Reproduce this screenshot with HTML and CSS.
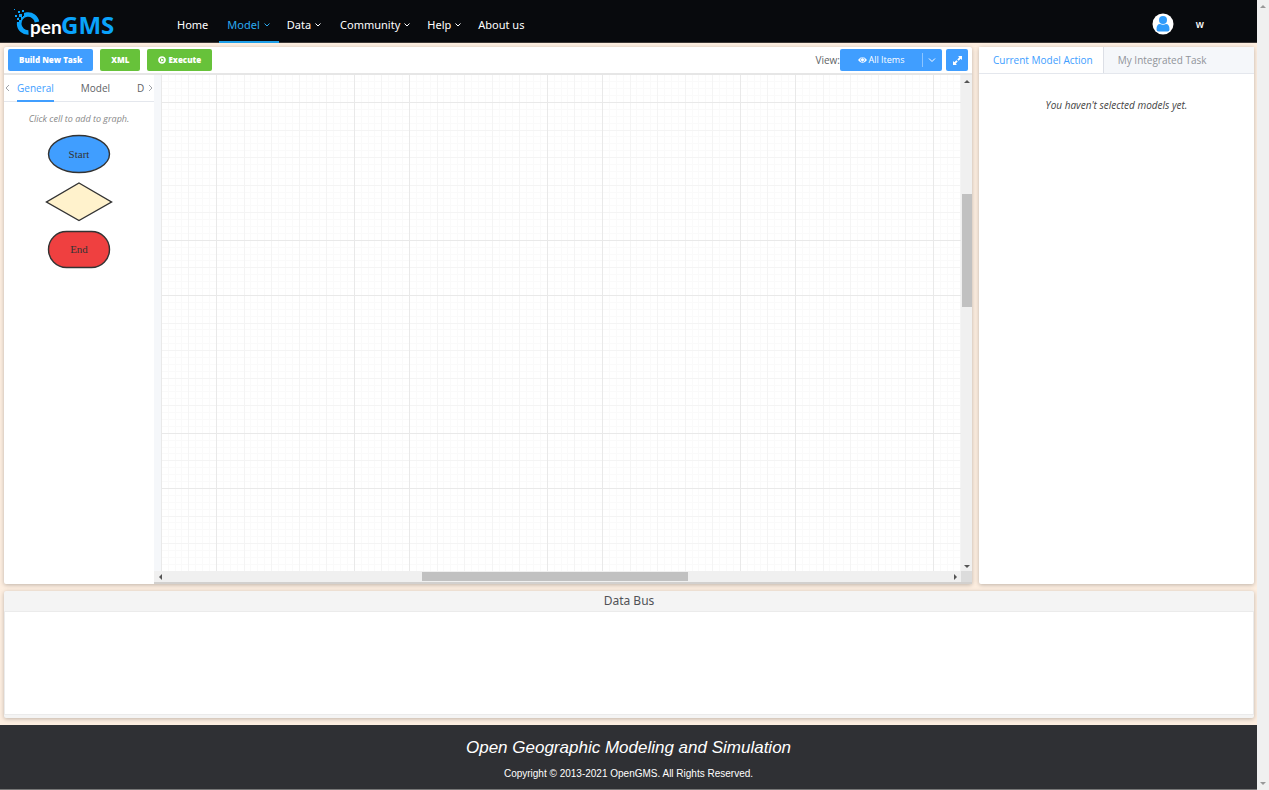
FILE: index.html
```
<!DOCTYPE html>
<html lang="en">
<head>
<meta charset="utf-8">
<title>OpenGMS</title>
<link rel="stylesheet" href="styles.css">
</head>
<body>
<div class="page">
  <header class="header">
    <a class="logo" href="#" aria-label="OpenGMS">
      <svg width="102" height="34" viewBox="0 0 102 34">
        <path d="M15.500 25.500A9 9 0 1 1 24 15" fill="none" stroke="#0aa3fb" stroke-width="4.600"/>
        <g fill="#080a0d">
          <rect x="9" y="6" width="2" height="3"/><rect x="6" y="10" width="2" height="3"/><rect x="8" y="8" width="2" height="2"/><rect x="4" y="13" width="2" height="2"/>
        </g>
        <g fill="#0aa3fb">
          <rect x="1" y="2" width="1" height="1"/><rect x="5" y="4" width="2" height="2"/><rect x="9" y="3" width="2" height="2"/>
          <rect x="2" y="8" width="2" height="2"/><rect x="6" y="7" width="3" height="3"/><rect x="4" y="11" width="2" height="2"/>
        </g>
        <text class="logo-pen" x="17" y="27">pen</text>
        <text class="logo-gms" x="48" y="27">GMS</text>
      </svg>
    </a>
    <nav class="nav">
      <a href="#">Home</a>
      <a href="#" class="active">Model<svg class="chev" viewBox="0 0 8 6"><path d="M1.500 1.500 4 4 6.500 1.500"/></svg></a>
      <a href="#">Data<svg class="chev" viewBox="0 0 8 6"><path d="M1.500 1.500 4 4 6.500 1.500"/></svg></a>
      <a href="#" class="community">Community<svg class="chev" viewBox="0 0 8 6"><path d="M1.500 1.500 4 4 6.500 1.500"/></svg></a>
      <a href="#">Help<svg class="chev" viewBox="0 0 8 6"><path d="M1.500 1.500 4 4 6.500 1.500"/></svg></a>
      <a href="#">About us</a>
    </nav>
    <div class="user">
      <svg width="22" height="22" viewBox="0 0 22 22"><circle cx="11" cy="11" r="10.500" fill="#fff"/><circle cx="11" cy="7" r="4" fill="#2f9cfb"/><path d="M4.500 16.500Q4.500 11 8 11q3 1.500 6 0 3.500 0 3.500 5.500 0 2-2 2h-9q-2 0-2-2z" fill="#2f9cfb"/></svg>
      <span>w</span>
    </div>
  </header>

  <main class="main">
    <div class="row">
      <section class="panel editor">
        <div class="toolbar">
          <button class="btn blue">Build New Task</button>
          <button class="btn green">XML</button>
          <button class="btn green"><svg width="8" height="8" viewBox="0 0 8 8"><circle cx="4" cy="4" r="3" fill="none" stroke="#fff" stroke-width="1.700"/><path d="M3 2.200 6 4 3 5.800z" fill="#fff"/></svg>Execute</button>
          <div class="view">
            <span>View:</span>
            <button class="btn blue items"><svg width="9" height="8" viewBox="0 0 9 8"><path d="M0 4Q4.500-2 9 4 4.500 10 0 4z" fill="#fff"/><circle cx="4.500" cy="3.800" r="2" fill="none" stroke="#409eff" stroke-width=".7"/></svg>All Items</button>
            <button class="btn blue drop" aria-label="Choose view"><svg width="8" height="6" viewBox="0 0 8 6"><path d="M1 1.500 4 4.500 7 1.500" fill="none" stroke="#fff"/></svg></button>
            <button class="btn blue expand" aria-label="Full screen"><svg width="9" height="9" viewBox="0 0 9 9" fill="#fff"><path d="M5 0h4v4L7.700 2.700 5.600 4.700 4.300 3.400 6.300 1.300zM4 9H0V5l1.300 1.300 2.100-2 1.300 1.300-2 2.100z"/></svg></button>
          </div>
        </div>
        <div class="work">
          <aside class="palette">
            <div class="tabs">
              <button class="arrow" aria-label="Previous"><svg width="5" height="8" viewBox="0 0 5 8"><path d="M4 1 1 4l3 3"/></svg></button>
              <div class="tab-clip">
                <button class="tab on">General</button><button class="tab">Model</button><button class="tab">D</button>
              </div>
              <button class="arrow" aria-label="Next"><svg width="5" height="8" viewBox="0 0 5 8"><path d="M1 1l3 3-3 3"/></svg></button>
            </div>
            <p class="hint">Click cell to add to graph.</p>
            <svg class="shapes" width="70" height="138" viewBox="0 0 70 138">
              <g stroke="#333" stroke-width="1.400">
                <ellipse cx="35" cy="20" rx="30.500" ry="18.500" fill="#409eff"/>
                <path d="M35 49 67.500 68 35 86.500 2.500 68z" fill="#fff2cc"/>
                <rect x="4.500" y="97.500" width="61" height="36" rx="18" fill="#ef4040"/>
              </g>
              <text x="35" y="24">Start</text>
              <text x="35" y="119">End</text>
            </svg>
          </aside>
          <div class="canvas-wrap">
            <div class="canvas">
              <svg width="100%" height="100%" aria-hidden="true">
                <defs><pattern id="grid" x="55" y="27" width="193" height="193" patternUnits="userSpaceOnUse">
                  <g fill="none" stroke-width="1">
                    <path stroke="#fafafa" d="M7.500 0v193M14.500 0v193M21.500 0v193M34.500 0v193M41.500 0v193M48.500 0v193M62.500 0v193M69.500 0v193M76.500 0v193M90.500 0v193M96.500 0v193M103.500 0v193M117.500 0v193M124.500 0v193M131.500 0v193M145.500 0v193M152.500 0v193M158.500 0v193M172.500 0v193M179.500 0v193M186.500 0v193"/>
                    <path stroke="#fafafa" d="M0 7.500h193M0 14.500h193M0 21.500h193M0 34.500h193M0 41.500h193M0 48.500h193M0 62.500h193M0 69.500h193M0 76.500h193M0 90.500h193M0 96.500h193M0 103.500h193M0 117.500h193M0 124.500h193M0 131.500h193M0 145.500h193M0 152.500h193M0 158.500h193M0 172.500h193M0 179.500h193M0 186.500h193"/>
                    <path stroke="#f4f4f4" d="M28.500 0v193M55.500 0v193M83.500 0v193M110.500 0v193M165.500 0v193M0 28.500h193M0 55.500h193M0 83.500h193M0 110.500h193M0 165.500h193"/>
                    <path stroke="#e9e9e9" d="M.5 0v193M138.500 0v193M0 .5h193M0 138.500h193"/>
                  </g>
                </pattern></defs>
                <rect width="100%" height="100%" fill="url(#grid)"/>
              </svg>
            </div>
            <div class="vbar"><i class="up"></i><b></b><i class="down"></i></div>
            <div class="hbar"><i class="left"></i><b></b><i class="right"></i></div>
            <div class="corner"></div>
          </div>
        </div>
      </section>
      <section class="panel actions">
        <div class="action-tabs"><button class="on">Current Model Action</button><button>My Integrated Task</button></div>
        <p>You haven't selected models yet.</p>
      </section>
    </div>
    <section class="panel bus"><h2>Data Bus</h2><div class="bus-body"></div></section>
  </main>

  <footer class="footer">
    <p class="slogan">Open Geographic Modeling and Simulation</p>
    <p class="copy">Copyright © 2013-2021 OpenGMS. All Rights Reserved.</p>
  </footer>
</div>
<div class="pagebar"><i class="up"></i><i class="down"></i></div>
</body>
</html>
```
FILE: styles.css
```
* { box-sizing: border-box; }
body { margin: 0; height: 100vh; display: flex; font: 10px/14px "Open Sans", "Noto Sans", sans-serif; color: #606266; }
button { font: inherit; color: inherit; border: 0; padding: 0; margin: 0; background: none; cursor: pointer; }
a { color: inherit; text-decoration: none; }
p, h2 { margin: 0; }
svg { display: block; flex: none; }
.page { flex: 1; min-width: 0; display: flex; flex-direction: column; }

.header { height: 43px; flex: none; display: flex; background: #080a0d; border-bottom: 1px solid #3c3837; color: #fff; }
.logo { padding: 7px 0 0 13px; width: 169px; }
.logo-pen { font: bold 19px Lato, sans-serif; fill: #fff; }
.logo-gms { font: bold 24px "Noto Sans", sans-serif; fill: #0aa3fb; }
.nav { display: flex; font: 11px/14px "Noto Sans", sans-serif; }
.nav a { display: flex; align-items: center; padding: 6px 8px 0; height: 43px; }
.nav .active { color: #2aa9ef; border-bottom: 2px solid #1e9fe8; padding-top: 8px; margin-left: 3px; }
.nav .community { padding-left: 10px; }
.chev { width: 8px; height: 6px; margin-left: 3px; fill: none; stroke: currentColor; }
.user { margin-left: auto; display: flex; align-items: center; gap: 22px; padding: 6px 53px 0 0; font: 600 10px/14px "Open Sans", sans-serif; }

.main { flex: 1; min-height: 0; display: flex; flex-direction: column; gap: 7px; padding: 4px 3px 7px 4px; background: #fdeee0; }
.row { flex: 1; min-height: 0; display: flex; gap: 7px; }
.panel { background: #fff; border-radius: 2px; box-shadow: 0 1px 4px rgba(0,0,0,.25); }
.editor { flex: 1; min-width: 0; display: flex; flex-direction: column; }
.toolbar { height: 28px; flex: none; display: flex; align-items: center; gap: 7px; padding: 0 4px; border-bottom: 2px solid #e6e6e6; }
.btn { height: 22px; display: flex; align-items: center; justify-content: center; gap: 2px; padding: 0 11px; color: #fff; border-radius: 2px; font: 800 8px/12px "Open Sans", sans-serif; }
.blue { background: #409eff; }
.green { background: #67c23a; }
.view { margin-left: auto; display: flex; align-items: center; }
.items { width: 82px; font: 9px/12px "Open Sans", sans-serif; border-radius: 2px 0 0 2px; }
.drop { width: 20px; padding: 0; border-radius: 0 2px 2px 0; position: relative; }
.drop::before { content: ""; position: absolute; left: 0; top: 4px; bottom: 4px; border-left: 1px solid #8cc5ff; }
.expand { width: 22px; padding: 0; margin-left: 4px; }

.work { flex: 1; min-height: 0; display: flex; }
.palette { width: 150px; flex: none; }
.tabs { display: flex; height: 27px; border-bottom: 1px solid #e4e7ed; }
.arrow { width: 7px; display: flex; align-items: center; justify-content: center; }
.arrow path { fill: none; stroke: #a0a3a8; }
.tab-clip { flex: 1; min-width: 0; display: flex; gap: 27px; padding-left: 6px; height: 27px; }
.tab { flex: none; height: 27px; padding-bottom: 2px; }
.tab.on { color: #409eff; border-bottom: 2px solid #409eff; padding-bottom: 0; }
.hint { margin-top: 10px; text-align: center; font-size: 9px; font-style: italic; color: #888; }
.shapes { margin: 8px auto 0; }
.shapes text { font: 11px "Liberation Serif", serif; fill: #333; text-anchor: middle; }

.canvas-wrap { flex: 1; min-width: 0; display: grid; grid-template: 1fr 11px / 1fr 11px; border-bottom: 2px solid #d2d0ce; }
.canvas { border-left: 7px solid #f5f7fa; min-height: 0; overflow: hidden; }
.vbar, .hbar { display: grid; background: #f0f0f0; }
.vbar { grid-template-rows: 3px 110fr 113fr 256fr 3px; padding: 5px 0 3px; justify-items: center; }
.vbar b { grid-row: 3; width: 10px; }
.vbar .down { grid-row: 5; }
.hbar { grid-template-columns: 3px 260fr 265fr 266fr 3px; padding: 0 4px 0 5px; align-items: center; }
.hbar b { grid-column: 3; height: 9px; }
.hbar .right { grid-column: 5; }
.vbar b, .hbar b { background: #c1c1c1; }
.corner { background: #dcdcdc; }
i { width: 0; height: 0; border: 3px solid transparent; }
.up { border-top: 0; border-bottom-color: #555; }
.down { border-bottom: 0; border-top-color: #555; }
.left { border-left: 0; border-right-color: #555; }
.right { border-right: 0; border-left-color: #555; }

.actions { width: 22%; flex: none; }
.action-tabs { display: flex; height: 27px; background: #f5f7fa; border-bottom: 1px solid #e4e7ed; }
.action-tabs button { padding: 0 12px 0 14px; color: #909399; }
.action-tabs .on { height: 26px; padding-right: 10px; background: #fff; color: #409eff; border-right: 1px solid #dcdfe6; }
.actions p { margin-top: 24px; text-align: center; font-style: italic; color: #444; }

.bus { flex: none; display: flex; flex-direction: column; background: #f4f4f4; padding-bottom: 3px; }
.bus h2 { font: 12px/20px "Noto Sans", sans-serif; text-align: center; color: #505256; }
.bus-body { height: 104px; background: #fff; border: 1px solid #ebebeb; }

.footer { flex: none; height: 65px; background: #2f3034; border-bottom: 1px solid #777; color: #fff; text-align: center; font-family: "Liberation Sans", sans-serif; padding-top: 13px; }
.slogan { font-size: 17px; line-height: 20px; font-style: italic; }
.copy { font-size: 10px; line-height: 14px; margin-top: 9px; }
.pagebar { width: 12px; flex: none; display: flex; flex-direction: column; justify-content: space-between; align-items: center; padding: 5px 0; background: #f0f0f0; }
.pagebar .up { border-bottom-color: #999; }
.pagebar .down { border-top-color: #999; }
```
